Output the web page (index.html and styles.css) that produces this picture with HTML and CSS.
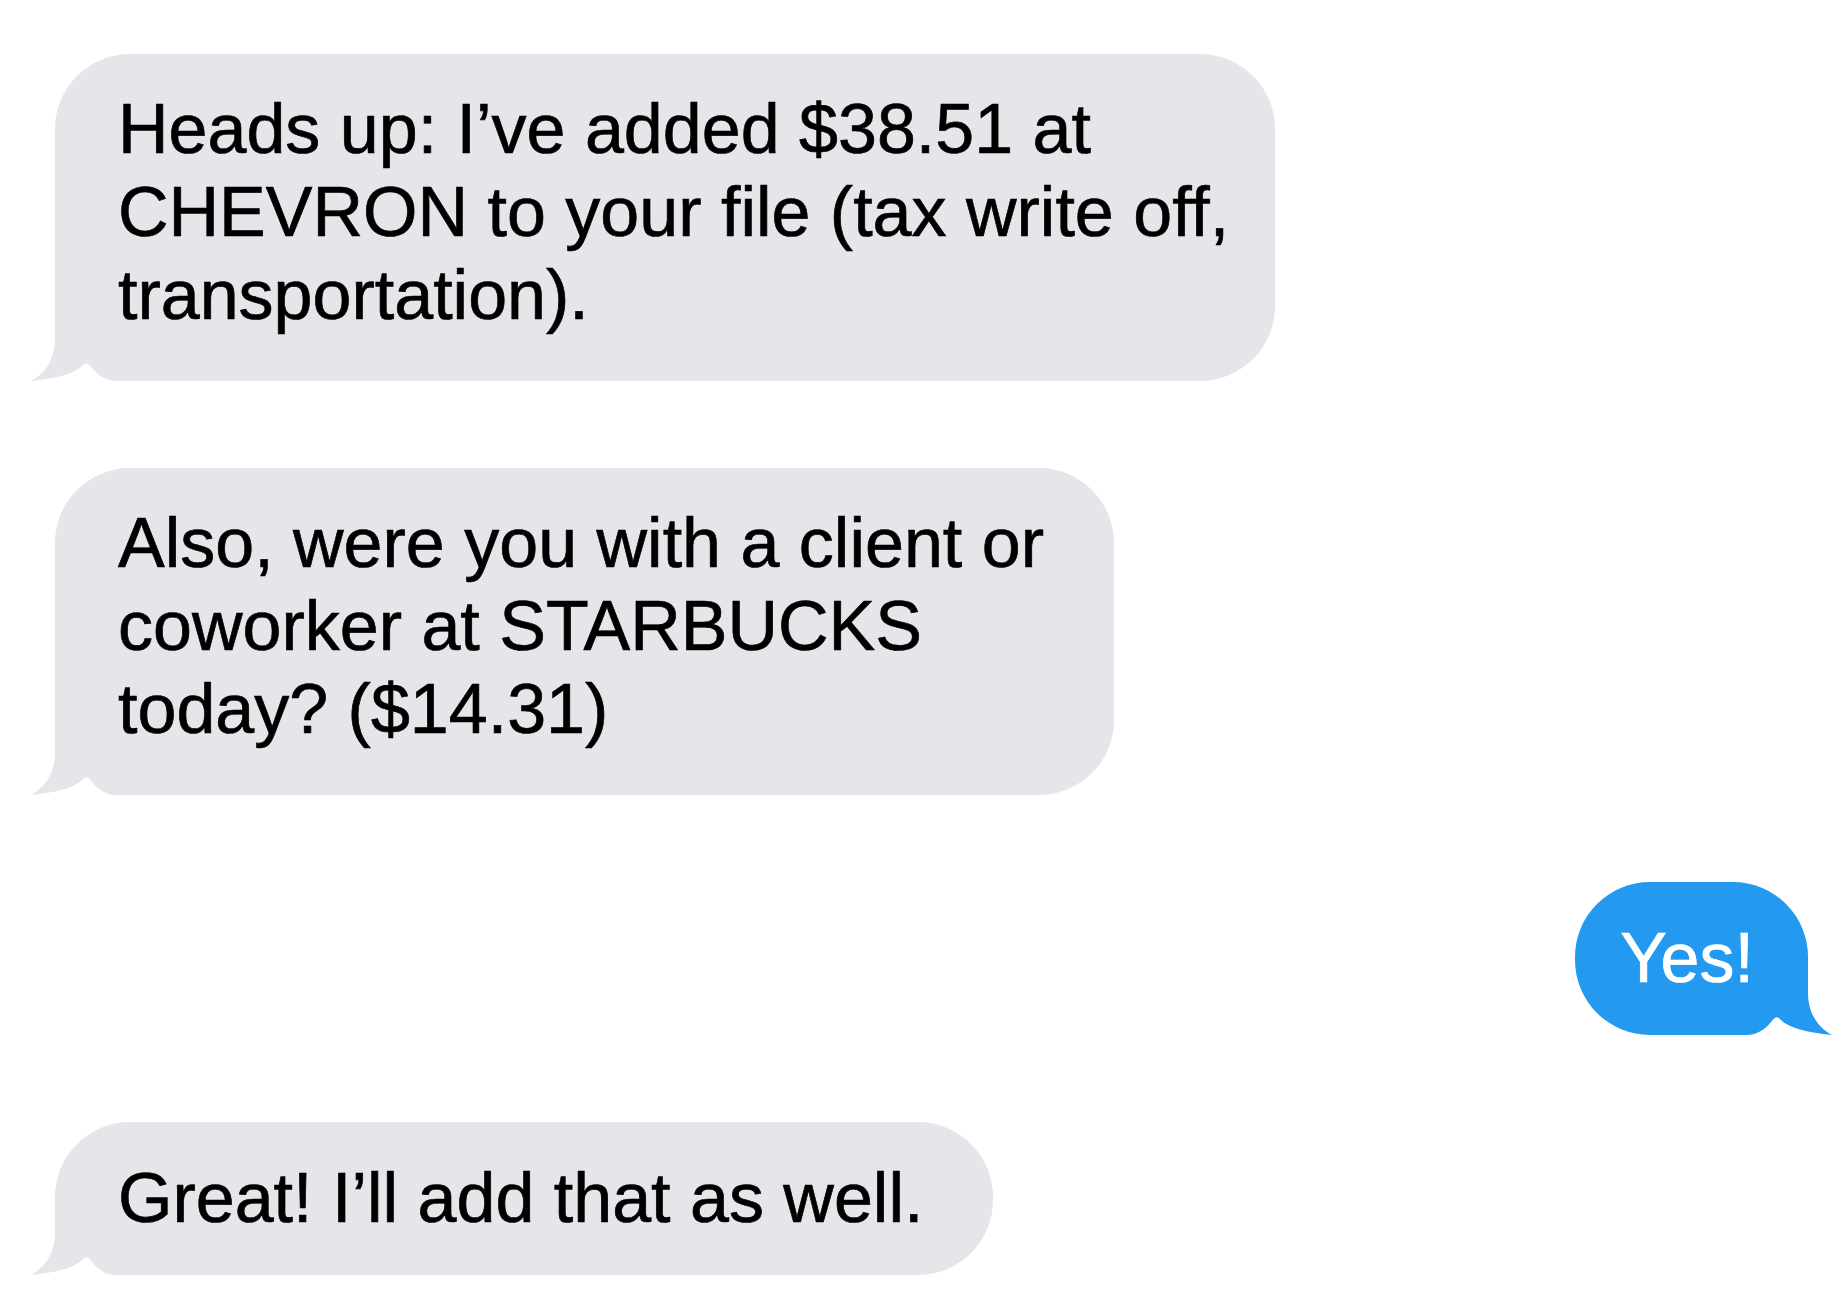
FILE: index.html
```html
<!DOCTYPE html>
<html lang="en">
<head>
<meta charset="utf-8">
<title>Messages</title>
<link rel="stylesheet" href="styles.css">
</head>
<body>
<main class="thread">
  <div class="row in">
    <div class="bubble gray multi snug">Heads up: I’ve added $38.51 at<br>CHEVRON to your file (tax write off,<br>transportation).<svg class="tail" viewBox="0 0 100 60" width="100" height="60"><path class="tail-fill" d="M0 60 C12 54 24 40 24 18 L24 56.5 C14 58.5 6 59.5 0 60 Z"/><path class="notch" d="M24 60 L24 56.5 C38 53.5 48 49 52 44 Q55 40.5 58.5 44 C66 54 74 60 86 60 Z"/></svg></div>
  </div>
  <div class="row in">
    <div class="bubble gray multi">Also, were you with a client or<br>coworker at STARBUCKS<br>today? ($14.31)<svg class="tail" viewBox="0 0 100 60" width="100" height="60"><path class="tail-fill" d="M0 60 C12 54 24 40 24 18 L24 56.5 C14 58.5 6 59.5 0 60 Z"/><path class="notch" d="M24 60 L24 56.5 C38 53.5 48 49 52 44 Q55 40.5 58.5 44 C66 54 74 60 86 60 Z"/></svg></div>
  </div>
  <div class="row out">
    <div class="bubble blue single">Yes!<svg class="tail" viewBox="0 0 100 60" width="100" height="60"><path class="tail-fill" d="M0 60 C12 54 24 40 24 18 L24 56.5 C14 58.5 6 59.5 0 60 Z"/><path class="notch" d="M24 60 L24 56.5 C38 53.5 48 49 52 44 Q55 40.5 58.5 44 C66 54 74 60 86 60 Z"/></svg></div>
  </div>
  <div class="row in">
    <div class="bubble gray single">Great! I’ll add that as well.<svg class="tail" viewBox="0 0 100 60" width="100" height="60"><path class="tail-fill" d="M0 60 C12 54 24 40 24 18 L24 56.5 C14 58.5 6 59.5 0 60 Z"/><path class="notch" d="M24 60 L24 56.5 C38 53.5 48 49 52 44 Q55 40.5 58.5 44 C66 54 74 60 86 60 Z"/></svg></div>
  </div>
</main>
</body>
</html>
```

FILE: styles.css
```css
html, body {
  margin: 0;
  padding: 0;
  background: #ffffff;
}

body {
  font-family: "Liberation Sans", Arial, Helvetica, sans-serif;
}

.thread {
  display: flex;
  flex-direction: column;
  gap: 87px;
  padding: 54px 38px 0 55px;
}

.row {
  display: flex;
}

.row.in {
  justify-content: flex-start;
}

.row.out {
  justify-content: flex-end;
}

.bubble {
  position: relative;
  font-size: 70px;
  line-height: 83px;
  border-radius: 75px;
  white-space: nowrap;
  -webkit-text-stroke: 0.7px currentColor;
}

.bubble.multi {
  padding: 34px 70px 44px 63px;
}

.bubble.single {
  padding: 35px 70px 35px 63px;
}

.bubble.snug {
  padding-right: 46px;
}

.bubble.gray {
  background: #e5e5ea;
  color: #000000;
  border-bottom-left-radius: 0;
}

.bubble.blue {
  background: #2399ef;
  color: #ffffff;
  border-bottom-right-radius: 0;
  padding-left: 45px;
  padding-right: 54px;
}

.tail {
  position: absolute;
  bottom: 0;
  display: block;
}

.gray .tail {
  left: -24px;
}

.blue .tail {
  right: -24px;
  transform: scaleX(-1);
}

.gray .tail-fill {
  fill: #e5e5ea;
}

.blue .tail-fill {
  fill: #2399ef;
}

.notch {
  fill: #ffffff;
}
```
